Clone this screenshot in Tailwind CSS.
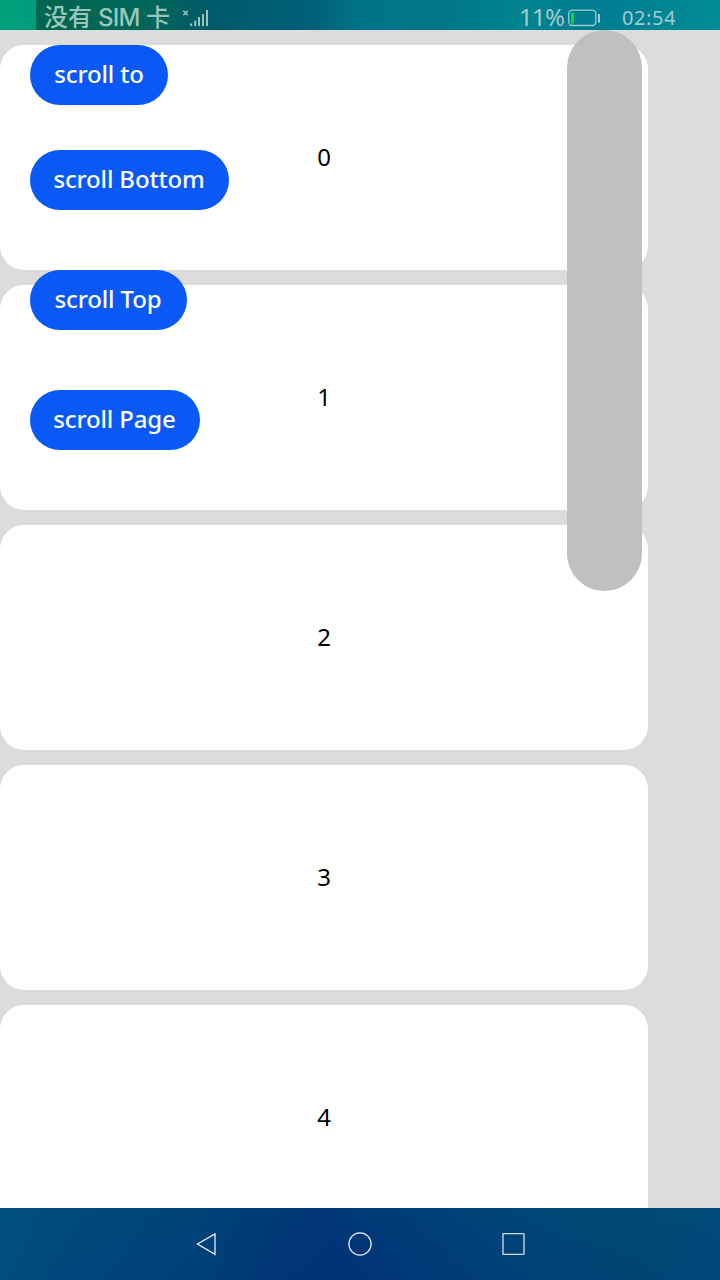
<!DOCTYPE html>
<html lang="zh-CN">
<head>
<meta charset="utf-8">
<title>Scroll</title>
<script src="https://cdn.jsdelivr.net/npm/@tailwindcss/browser@4"></script>
</head>
<body class="w-[720px] h-[1280px] overflow-hidden flex flex-col bg-[#dcdcdc] font-['Noto_Sans','Noto_Sans_CJK_SC',sans-serif] text-2xl text-black">
  <header class="h-[30px] shrink-0 flex items-start whitespace-nowrap text-[#a5cbd0] bg-[linear-gradient(90deg,#00a07c_0,#009c7c_36px,#006650_36px,#00665a_150px,#005a66_205px,#005b70_240px,#006079_310px,#00758a_365px,#007688_440px,#00848f_520px,#007c90_590px,#008c97_720px)]">
    <div class="w-[128px] ml-[44px] leading-[35px] text-[#9bc4bb] font-['Inter','Noto_Sans_CJK_SC',sans-serif] font-medium tracking-[-0.1px]">没有 <span class="tracking-[-0.8px]">SIM</span> 卡</div>
    <svg class="w-[28px] h-[30px] ml-[10px]" viewBox="0 0 28 30" fill="none" stroke="#9bc4c0">
      <path d="M1.3 10.8l4.4 4.4M5.7 10.8l-4.4 4.4" stroke-width="1.6"/>
      <path d="M9.2 23.5v2.5M13.2 20.5V26M17 17v9M21 14v12M25 10v16" stroke-width="2"/>
    </svg>
    <div class="w-[49px] ml-[309px] leading-[34px] tracking-[-0.7px]">11%</div>
    <svg class="w-[34px] h-[30px]" viewBox="0 0 34 30" fill="none">
      <rect x=".8" y="10.2" width="27" height="15.3" rx="3.5" stroke="#a5cbd0" stroke-width="1.3"/>
      <path d="M4.5 12.5v11" stroke="#00e83c" stroke-width="2.6"/>
      <path d="M31 14v8.5" stroke="#a5cbd0" stroke-width="2"/>
    </svg>
    <div class="ml-5 leading-[35px] text-xl tracking-[0.6px]">02:54</div>
  </header>

  <main class="relative h-[1178px] shrink-0 overflow-hidden">
    <div class="w-[648px] flex flex-col gap-[15px] pt-[15px]">
      <div class="h-[225px] shrink-0 rounded-3xl bg-white flex items-center justify-center pb-0.5">0</div>
      <div class="h-[225px] shrink-0 rounded-3xl bg-white flex items-center justify-center pb-0.5">1</div>
      <div class="h-[225px] shrink-0 rounded-3xl bg-white flex items-center justify-center pb-0.5">2</div>
      <div class="h-[225px] shrink-0 rounded-3xl bg-white flex items-center justify-center pb-0.5">3</div>
      <div class="h-[225px] shrink-0 rounded-3xl bg-white flex items-center justify-center pb-0.5">4</div>
    </div>
    <div class="absolute left-[567px] top-0 w-[75px] h-[560.5px] rounded-full bg-[#c0c0c0]"></div>
    <div class="absolute left-[30px] top-[15px] flex flex-col items-start font-medium text-white whitespace-nowrap tracking-[-0.15px]">
      <button class="w-[138px] h-[60px] rounded-full bg-[#0a59f7] pb-0.5">scroll to</button>
      <button class="w-[199px] h-[60px] mt-[45px] rounded-full bg-[#0a59f7] pb-0.5 pr-px">scroll Bottom</button>
      <button class="w-[157px] h-[60px] mt-[60px] rounded-full bg-[#0a59f7] pb-0.5 pr-px">scroll Top</button>
      <button class="w-[170px] h-[60px] mt-[60px] rounded-full bg-[#0a59f7] pb-0.5 pr-px">scroll Page</button>
    </div>
  </main>

  <nav class="h-[72px] shrink-0 flex items-center justify-center gap-[129px] bg-[linear-gradient(180deg,#004a7033,#00307033),linear-gradient(80deg,#005482_0,#004a7e_12%,#00427a_28%,#003678_38%,#003278_46%,#003a7a_56%,#00447a_70%,#004a74_86%,#004c7c_100%)]">
    <svg class="w-6 h-6" viewBox="0 0 24 24" fill="none" stroke="#e8f0f8" stroke-width="1.3"><path d="M2.5 12L20 1.9v20.4z"/></svg>
    <svg class="w-6 h-6" viewBox="0 0 24 24" fill="none" stroke="#e8f0f8" stroke-width="1.2"><circle cx="12" cy="12" r="11.1"/></svg>
    <svg class="w-6 h-6" viewBox="0 0 24 24" fill="none" stroke="#cfdeea" stroke-width="1.3"><rect x="2" y="1.6" width="21" height="20.8" rx=".5"/></svg>
  </nav>
</body>
</html>
